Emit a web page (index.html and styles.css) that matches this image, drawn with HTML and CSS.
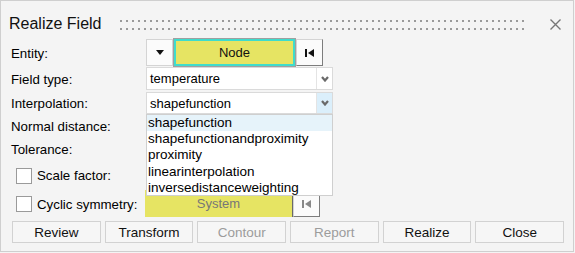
FILE: index.html
```html
<!DOCTYPE html>
<html lang="en">
<head>
    <meta charset="UTF-8">
    <title>Realize Field</title>
    <link rel="stylesheet" href="styles.css">
</head>
<body>
    <div class="dialog">
        <div class="title-bar">
            <span class="title">Realize Field</span>
            <div class="grip"></div>
            <svg class="close" width="11" height="11" viewBox="0 0 11 11"><path d="M0.5 0.5 L10.5 10.5 M10.5 0.5 L0.5 10.5" stroke="#777" stroke-width="1.4" fill="none"/></svg>
        </div>
        <div class="form">
            <label class="lbl">Entity:</label>
            <div class="entity">
                <button class="tool-btn drop-btn"><svg width="8" height="5" viewBox="0 0 8 5"><polygon points="0,0 8,0 4,5" fill="#111"/></svg></button>
                <button class="pick pick-active">Node</button>
                <button class="tool-btn reset-btn"><svg width="9" height="8" viewBox="0 0 9 8"><rect x="0" y="0" width="2" height="8" fill="#111"/><polygon points="9,0 3,4 9,8" fill="#111"/></svg></button>
            </div>

            <label class="lbl">Field type:</label>
            <div class="select">
                <span class="value">temperature</span>
                <span class="arrow"><svg width="8" height="6" viewBox="0 0 8 6"><polyline points="1,1 4,4.5 7,1" stroke="#6a6a6a" stroke-width="2.2" fill="none"/></svg></span>
            </div>

            <label class="lbl">Interpolation:</label>
            <div class="select open">
                <span class="value">shapefunction</span>
                <span class="arrow"><svg width="8" height="6" viewBox="0 0 8 6"><polyline points="1,1 4,4.5 7,1" stroke="#6a6a6a" stroke-width="2.2" fill="none"/></svg></span>
                <ul class="menu">
                    <li class="hover">shapefunction</li>
                    <li>shapefunctionandproximity</li>
                    <li>proximity</li>
                    <li>linearinterpolation</li>
                    <li>inversedistanceweighting</li>
                </ul>
            </div>

            <label class="lbl">Normal distance:</label>
            <div></div>

            <label class="lbl">Tolerance:</label>
            <div></div>

            <label class="lbl check"><span class="box"></span>Scale factor:</label>
            <div></div>

            <label class="lbl check"><span class="box"></span>Cyclic symmetry:</label>
            <div class="entity system">
                <button class="pick pick-off">System</button>
                <button class="tool-btn reset-btn"><svg width="9" height="8" viewBox="0 0 9 8"><rect x="0" y="0" width="2" height="8" fill="#888"/><polygon points="9,0 3,4 9,8" fill="#888"/></svg></button>
            </div>
        </div>
        <div class="actions">
            <button>Review</button>
            <button>Transform</button>
            <button class="disabled">Contour</button>
            <button class="disabled">Report</button>
            <button>Realize</button>
            <button>Close</button>
        </div>
    </div>
</body>
</html>
```

FILE: styles.css
```css
body { margin: 0; font-family: "Liberation Sans", Arial, sans-serif; font-size: 13px; color: #000; background: #f4f4f4; }
.dialog { width: 574px; height: 252px; box-sizing: border-box; border: 1px solid #cfcfcf; background: #f4f4f4; padding: 0 10px 0 10px; }
.title-bar { display: flex; align-items: center; height: 20px; margin-top: 13px; margin-left: -2px; }
.title { font-size: 16px; line-height: 20px; color: #111; }
.grip { flex: 1; height: 10px; margin: 1px 24px 0 19px; background: radial-gradient(circle at 1px 1px, #9a9a9a 1px, transparent 1.3px) 0 0 / 6px 8px; }
.close { margin-right: 2px; margin-top: 1px; }
.form { display: grid; grid-template-columns: 135px 187px; grid-template-rows: 28px 24px 23px 23px 23px 30px 27px; margin-top: 5px; position: relative; }
.lbl { display: flex; align-items: center; padding-top: 1px; font-size: 13.3px; }
.check { padding-left: 5px; }
.box { width: 14px; height: 14px; border: 1px solid #9a9a9a; background: #fff; margin-right: 5px; }
.entity { display: flex; height: 27px; width: 177px; }
button { font-family: inherit; font-size: 13px; padding: 0; cursor: pointer; }
.tool-btn { width: 27px; height: 27px; background: #fbfbfb; border: 1px solid #d4d4d4; display: flex; align-items: center; justify-content: center; }
.reset-btn { border-right-color: #7d7d7d; border-bottom-color: #7d7d7d; }
.pick { flex: 1; height: 27px; background: #e6e463; color: #111; }
.pick-active { border: 2px solid #3fdccc; box-shadow: 0 0 0 1px #a0a0a0; margin: 0 1px; }
.pick-off { border: none; border-right: 1px solid #6a6a6a; color: #777; }
.system { margin-left: -1px; }
.system .pick { flex: none; width: 148px; }
.select { display: flex; height: 23px; box-sizing: border-box; border: 1px solid #dadada; background: #fff; position: relative; }
.value { flex: 1; padding-left: 3px; line-height: 21px; }
.arrow { width: 15px; border-left: 1px solid #e4e4e4; display: flex; align-items: center; justify-content: center; }
.open { margin-top: 1px; height: 22px; }
.open .arrow { background: #dbeffb; }
.menu { position: absolute; left: -1px; top: 21px; width: 187px; box-sizing: border-box; height: 82px; margin: 0; padding: 0; list-style: none; background: #fff; border: 1px solid #cfcfcf; font-size: 13.5px; z-index: 2; }
.menu li { line-height: 16.2px; padding-left: 1px; }
.menu .hover { background: #e6f3fa; }
.actions { display: grid; grid-template-columns: repeat(6, 1fr); gap: 4px; margin: 4px 0 0 1px; width: 552px; }
.actions button { height: 22px; background: #f6f6f6; border: 1px solid #d2d2d2; font-size: 13.5px; color: #111; }
.actions .disabled { color: #9c9c9c; }
```
